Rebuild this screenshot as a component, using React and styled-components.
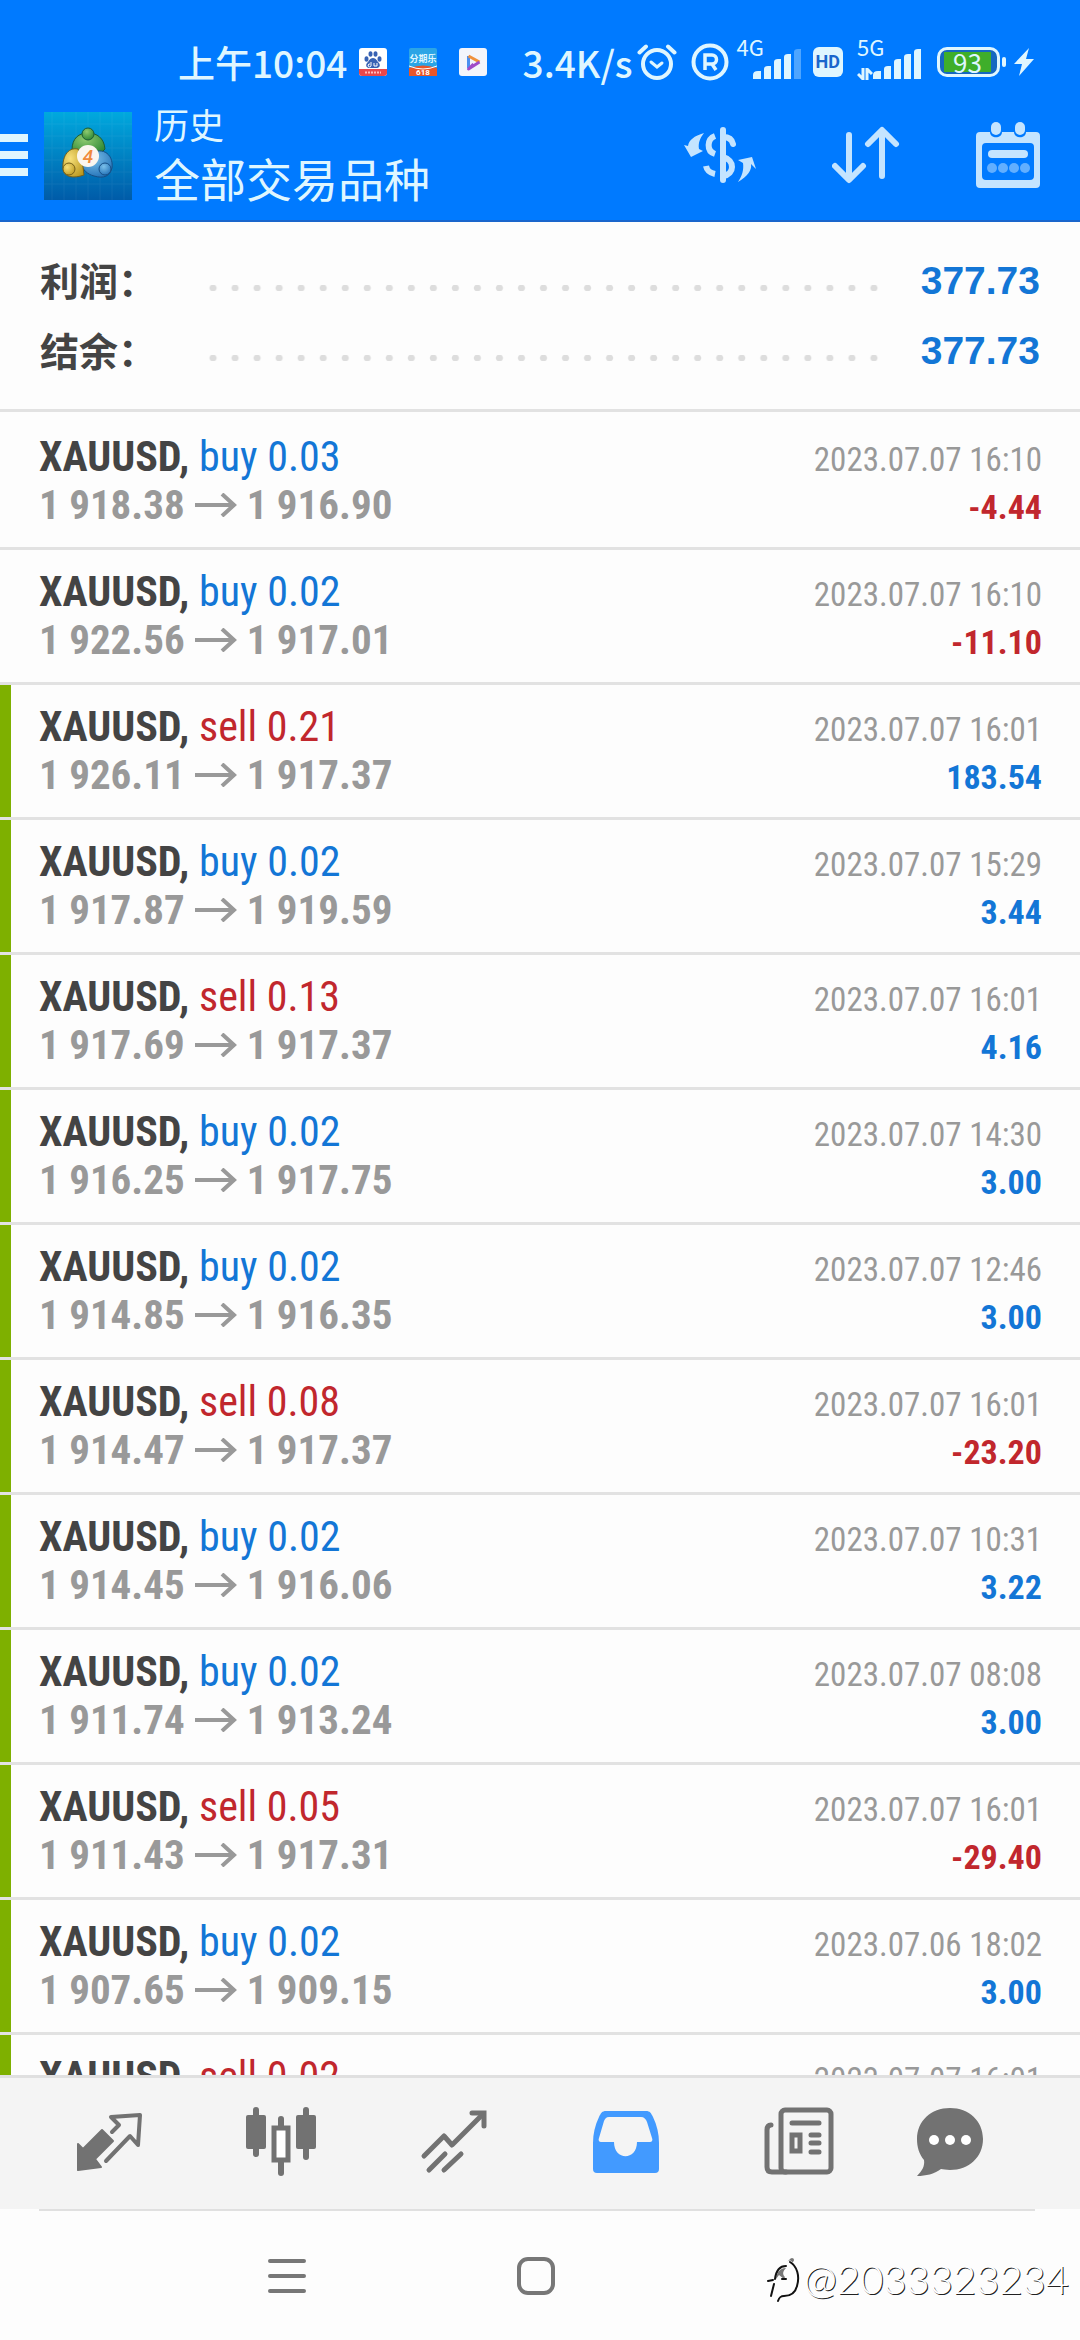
import React from "react";
import styled, { createGlobalStyle } from "styled-components";

const BLUE = "#1376d6";
const RED = "#c1272d";
const GREY = "#999";
const ICE = "#dff6ff";

const trades = [
  { type: "buy", lots: "0.03", open: "1 918.38", close: "1 916.90", time: "2023.07.07 16:10", profit: "-4.44", marked: false },
  { type: "buy", lots: "0.02", open: "1 922.56", close: "1 917.01", time: "2023.07.07 16:10", profit: "-11.10", marked: false },
  { type: "sell", lots: "0.21", open: "1 926.11", close: "1 917.37", time: "2023.07.07 16:01", profit: "183.54", marked: true },
  { type: "buy", lots: "0.02", open: "1 917.87", close: "1 919.59", time: "2023.07.07 15:29", profit: "3.44", marked: true },
  { type: "sell", lots: "0.13", open: "1 917.69", close: "1 917.37", time: "2023.07.07 16:01", profit: "4.16", marked: true },
  { type: "buy", lots: "0.02", open: "1 916.25", close: "1 917.75", time: "2023.07.07 14:30", profit: "3.00", marked: true },
  { type: "buy", lots: "0.02", open: "1 914.85", close: "1 916.35", time: "2023.07.07 12:46", profit: "3.00", marked: true },
  { type: "sell", lots: "0.08", open: "1 914.47", close: "1 917.37", time: "2023.07.07 16:01", profit: "-23.20", marked: true },
  { type: "buy", lots: "0.02", open: "1 914.45", close: "1 916.06", time: "2023.07.07 10:31", profit: "3.22", marked: true },
  { type: "buy", lots: "0.02", open: "1 911.74", close: "1 913.24", time: "2023.07.07 08:08", profit: "3.00", marked: true },
  { type: "sell", lots: "0.05", open: "1 911.43", close: "1 917.31", time: "2023.07.07 16:01", profit: "-29.40", marked: true },
  { type: "buy", lots: "0.02", open: "1 907.65", close: "1 909.15", time: "2023.07.06 18:02", profit: "3.00", marked: true },
  { type: "sell", lots: "0.02", open: "1 907.43", close: "1 917.31", time: "2023.07.07 16:01", profit: "-19.76", marked: true }
];

const AlarmIcon = () => (
  <svg width="40" height="38" viewBox="0 0 40 38" fill="none" stroke={ICE} strokeWidth="4" strokeLinecap="round">
    <circle cx="20" cy="21" r="14" />
    <path d="M2.500 9.500 9 3.500M37.500 9.500 31 3.500" />
    <path d="m14 19 6 5 5-4" strokeWidth="3" />
  </svg>
);

const RegisteredIcon = () => (
  <svg width="38" height="38" viewBox="0 0 38 38" fill="none" stroke={ICE}>
    <circle cx="19" cy="19" r="16.500" strokeWidth="4" />
    <path d="M14 27V12h7a4.500 4.500 0 0 1 0 9h-7m7 0 4 6" strokeWidth="3.500" />
  </svg>
);

const Bars = ({ full }) => (
  <svg width="50" height="32" viewBox="0 0 50 32" fill={ICE}>
    <path d="M0 31v-4q0-4 5-4h3v8zM11 31V21q0-3 4-3h3v13zM21 31V14q0-3 4-3h3v20zM31 31V9q0-3 4-3h3v25z" />
    <path d="M41 31V4q0-3 4-3h3v30z" opacity={full ? 1 : 0.35} />
  </svg>
);

const DataArrows = () => (
  <svg width="16" height="12" viewBox="0 0 16 12" fill="none" stroke={ICE} strokeWidth="3">
    <path d="M6 0v11L1 6M10 12V1l5 5" />
  </svg>
);

const BoltIcon = () => (
  <svg width="20" height="28" viewBox="0 0 20 28" fill={ICE}>
    <path d="M15 0 0 16h8L5 28 20 11h-8z" />
  </svg>
);

const PawIcon = () => (
  <svg width="28" height="28" viewBox="0 0 28 28">
    <rect width="28" height="28" rx="3" fill="#fff" />
    <g fill="#3862b4">
      <ellipse cx="7.500" cy="11" rx="2" ry="2.800" />
      <ellipse cx="11.500" cy="6" rx="2" ry="2.800" />
      <ellipse cx="16.500" cy="6" rx="2" ry="2.800" />
      <ellipse cx="20.500" cy="11" rx="2" ry="2.800" />
      <path d="M14 10c3 0 4 3 6 5 2 3 0 5-3 5h-6c-3 0-5-2-3-5 2-2 3-5 6-5z" />
    </g>
    <path d="M11 16a1.500 1.500 0 1 0 1 2v-4M15 15v3h3v-3" stroke="#fff" fill="none" />
    <path d="M0 21h28v4a3 3 0 0 1-3 3H3a3 3 0 0 1-3-3z" fill="#e8474c" />
    <path d="M6 24.500h16" stroke="#fbb" strokeWidth="2" strokeDasharray="2 1" />
  </svg>
);

const SaleIcon = () => (
  <svg width="28" height="28" viewBox="0 0 28 28">
    <rect width="28" height="28" rx="2" fill="#2ba5e6" />
    <path d="M0 20q14-5 28 0v8H0z" fill="#e8562a" />
    <path d="M0 18q14 6 28 0" fill="none" stroke="#fff" />
    <text x="14" y="14" fontSize="9" fontFamily="Noto Sans CJK SC, sans-serif" fontWeight="700" fill="#dff6ff" textAnchor="middle">分期乐</text>
    <text x="14" y="27" fontSize="8" fontFamily="Roboto, sans-serif" fontWeight="700" fill="#fff" textAnchor="middle">618</text>
  </svg>
);

const PlayIcon = () => (
  <svg width="28" height="28" viewBox="0 0 28 28" fill="none" strokeWidth="3" strokeLinejoin="round">
    <rect width="28" height="28" rx="3" fill="#f3f5fb" />
    <path d="M9.500 20V8" stroke="#4a8ff0" />
    <path d="m9.500 8 11 6" stroke="#f0913c" />
    <path d="m20.500 14-11 7 5-5" stroke="#a04bc8" />
  </svg>
);

const MetaLogo = () => (
  <svg width="88" height="88" viewBox="0 0 88 88">
    <defs>
      <linearGradient id="tile" x1="0" y1="0" x2="0" y2="1">
        <stop offset="0" stopColor="#00a9de" />
        <stop offset="1" stopColor="#005ba8" />
      </linearGradient>
      <radialGradient id="leaf" cx=".4" cy=".3" r=".8">
        <stop offset="0" stopColor="#8fca70" />
        <stop offset="1" stopColor="#23812f" />
      </radialGradient>
      <radialGradient id="gold" cx=".35" cy=".35" r=".8">
        <stop offset="0" stopColor="#f7e07a" />
        <stop offset="1" stopColor="#b8951c" />
      </radialGradient>
      <radialGradient id="sky" cx=".4" cy=".3" r=".8">
        <stop offset="0" stopColor="#7cc0ea" />
        <stop offset="1" stopColor="#1b6cb4" />
      </radialGradient>
    </defs>
    <rect width="88" height="88" fill="url(#tile)" />
    <path d="M8 0v88M20 0v88M32 0v88M44 0v88M56 0v88M68 0v88M80 0v88M0 12h88M0 24h88M0 36h88M0 48h88M0 60h88M0 72h88" stroke="#fff" opacity=".05" />
    <path d="M28 38c0-12 7-17 16-17s16 5 17 16l-6 6-22-1z" fill="url(#leaf)" stroke="#1e5b34" />
    <path d="M44 44c12-11 26-3 24 12-2 8-8 11-18 8-7-2-11-6-13-12z" fill="url(#sky)" stroke="#174f86" />
    <path d="M34 37c-11-2-16 9-15 20 1 8 10 10 21 6l-2-16z" fill="url(#gold)" stroke="#75601a" />
    <circle cx="44" cy="22" r="6" fill="url(#leaf)" stroke="#1e5b34" />
    <circle cx="61" cy="57" r="6" fill="url(#sky)" stroke="#174f86" />
    <circle cx="25" cy="57" r="6" fill="url(#gold)" stroke="#75601a" />
    <circle cx="44" cy="44" r="11" fill="#fbf6ef" />
    <text x="44" y="51" fontSize="19" fontStyle="italic" fontFamily="Roboto, sans-serif" fontWeight="500" fill="#f08a3c" textAnchor="middle">4</text>
  </svg>
);

const MenuIcon = () => (
  <svg width="28" height="42" viewBox="0 0 28 42" fill={ICE}>
    <path d="M0 0h28v8H0zM0 17h28v8H0zM0 34h28v8H0z" />
  </svg>
);

const CurrencyIcon = () => (
  <svg width="72" height="56" viewBox="0 0 72 56" fill="none" stroke="#c4e4ff" strokeWidth="6">
    <path d="M39 3v50" strokeLinecap="round" />
    <path d="M39 10c5 0 9 2 10 7" strokeLinecap="round" />
    <path d="M39 30c12 3 12 17 0 19" />
    <path d="M31 9c-8 3-9 15 0 18" />
    <path d="M22 39c1 5 4 7 9 8" strokeLinecap="butt" />
    <path d="M20 6C10 9 5 13 4 19l-4-1 7 12 12-6-4-2c-1-6 1-11 5-16zM54 55c10-6 14-12 13-18l5 5-4-12-14 3 5 3c1 7-1 13-5 19z" fill="#c4e4ff" stroke="none" />
  </svg>
);

const SortIcon = () => (
  <svg width="68" height="58" viewBox="0 0 68 58" fill="none" stroke="#c4e4ff" strokeWidth="6" strokeLinecap="round" strokeLinejoin="round">
    <path d="M17 9v44M3 40l14 14 14-14" />
    <path d="M50 50V5M36 18 50 4l14 14" />
  </svg>
);

const CalendarIcon = () => (
  <svg width="64" height="66" viewBox="0 0 64 66" fill="#c4e4ff">
    <path d="M4 10h10c0 7 12 7 12 0h12c0 7 12 7 12 0h10a4 4 0 0 1 4 4v48a4 4 0 0 1-4 4H4a4 4 0 0 1-4-4V14a4 4 0 0 1 4-4zm6 11a4 4 0 0 0-4 4v29a4 4 0 0 0 4 4h44a4 4 0 0 0 4-4V25a4 4 0 0 0-4-4z" fillRule="evenodd" />
    <rect x="15" y="0" width="10" height="13" rx="5" />
    <rect x="39" y="0" width="10" height="13" rx="5" />
    <rect x="12" y="28" width="40" height="8" rx="4" />
    <g opacity=".5">
      <circle cx="16" cy="46" r="5" />
      <circle cx="27" cy="46" r="5" />
      <circle cx="38" cy="46" r="5" />
      <circle cx="49" cy="46" r="5" />
    </g>
  </svg>
);

const ArrowIcon = () => (
  <svg width="42" height="24" viewBox="0 0 42 24" fill="none" stroke={GREY} strokeWidth="4">
    <path d="M0 12h38M27 1l12 11-12 11" />
  </svg>
);

const QuotesIcon = () => (
  <svg width="70" height="70" viewBox="0 0 70 70" fill="none" stroke="#727272" strokeWidth="4" strokeLinejoin="round" strokeLinecap="round">
    <path d="m39 26 7-7-8-8 29-2-2 30-8-9-24 25" />
    <path d="M29 24 40 35 22 53l6 8-23 3V38l5 5z" fill="#727272" strokeWidth="2" />
  </svg>
);

const CandlesIcon = () => (
  <svg width="70" height="70" viewBox="0 0 70 70" fill="#727272">
    <rect x="7" y="1" width="6" height="50" rx="3" />
    <rect x="0" y="9" width="20" height="34" rx="2" />
    <rect x="57" y="1" width="6" height="53" rx="3" />
    <rect x="50" y="9" width="20" height="34" rx="2" />
    <rect x="32" y="10" width="6" height="60" rx="3" />
    <rect x="28" y="22" width="14" height="32" fill="#fff" stroke="#727272" strokeWidth="5" />
  </svg>
);

const TrendIcon = () => (
  <svg width="70" height="70" viewBox="0 0 70 70" fill="none" stroke="#727272" strokeWidth="5" strokeLinecap="round">
    <path d="m5 50 20-20 8 9L64 8" strokeLinejoin="round" />
    <path d="M53 7h12v13" />
    <path d="M10 64 26 48M25 64l17-16" />
  </svg>
);

const InboxIcon = () => (
  <svg width="70" height="70" viewBox="0 0 70 70">
    <path d="M15 5h40c4 0 5 2 7 6 4 8 6 17 6 26v26a4 4 0 0 1-4 4H6a4 4 0 0 1-4-4V37c0-9 2-18 6-26 2-4 3-6 7-6zm3 6c-3 0-4 2-5 4L8 32c-1 2 0 4 2 4h13c0 19 23 19 23 0h13c2 0 3-2 2-4l-5-16c-1-3-3-5-6-5z" fill="#429aff" fillRule="evenodd" />
  </svg>
);

const NewsIcon = () => (
  <svg width="70" height="70" viewBox="0 0 70 70" fill="none" stroke="#727272" strokeWidth="5" strokeLinecap="round">
    <rect x="17" y="4" width="50" height="62" rx="4" />
    <path d="M7 19q-4 0-4 5v37q0 5 5 5h14" />
    <path d="M28 17h27M47 29h8M47 37h8M47 46h8" />
    <rect x="28" y="29" width="8" height="16" />
  </svg>
);

const ChatIcon = () => (
  <svg width="70" height="70" viewBox="0 0 70 70">
    <path d="M35 2c19 0 33 13 33 31S54 64 35 64c-4 0-7-1-9-1-7 5-15 7-24 7 5-5 8-10 7-16C4 48 2 41 2 33 2 15 16 2 35 2z" fill="#727272" />
    <g fill="#fff">
      <circle cx="19" cy="34" r="5" />
      <circle cx="35" cy="34" r="5" />
      <circle cx="51" cy="34" r="5" />
    </g>
  </svg>
);

const RecentsIcon = () => (
  <svg width="38" height="38" viewBox="0 0 38 38" stroke="#777" strokeWidth="4" strokeLinecap="round">
    <path d="M2 4h34M2 19h34M2 34h34" />
  </svg>
);

const HomeIcon = () => (
  <svg width="38" height="38" viewBox="0 0 38 38" fill="none" stroke="#777" strokeWidth="4">
    <rect x="2" y="2" width="34" height="34" rx="9" />
  </svg>
);

const BackIcon = () => (
  <svg width="38" height="38" viewBox="0 0 38 38" fill="none" stroke="#777" strokeWidth="4" strokeLinecap="round">
    <path d="M26 3 10 19" />
  </svg>
);

const FlowerIcon = () => (
  <svg width="36" height="50" viewBox="0 0 36 50" fill="none" strokeLinecap="round">
    <path d="M9 24c1-8 5-14 15-16 8 5 10 22 4 30-4 4-10 3-16 2z" fill="#fdfdfd" stroke="#fdfdfd" strokeWidth="3" />
    <path d="M10 25c1-7 4-11 10-11-3 3-4 6-1 9l-1 2-5-4z" fill="#777" />
    <path d="M20 12c-7 0-10 5-11 13M2 27l5-1M16 25h4M8 30 5 42" stroke="#111" strokeWidth="2" />
    <path d="M24 8c7 4 10 14 7 24-2 8-8 10-13 10-4 0-5 2-6 5" stroke="#111" strokeWidth="2" />
  </svg>
);

const SummaryRow = ({ label, value }) => (
  <SummaryLine>
    <dt>{label}</dt>
    <Dots />
    <dd>{value}</dd>
  </SummaryLine>
);

const TradeRow = ({ trade }) => (
  <Trade>
    <Marker $on={trade.marked} />
    <TradeBody>
      <Line>
        <Deal $sell={trade.type === "sell"}>
          <b>XAUUSD,</b> {trade.type} {trade.lots}
        </Deal>
        <Time>{trade.time}</Time>
      </Line>
      <Line>
        <Prices>
          {trade.open}
          <ArrowIcon />
          {trade.close}
        </Prices>
        <Profit $loss={trade.profit.startsWith("-")}>{trade.profit}</Profit>
      </Line>
    </TradeBody>
  </Trade>
);

const App = () => (
  <Screen>
    <GlobalStyle />
    <Header>
      <StatusBar>
        <Clock>上午10:04</Clock>
        <AppIcons>
          <PawIcon />
          <SaleIcon />
          <PlayIcon />
        </AppIcons>
        <Speed>3.4K/s</Speed>
        <AlarmIcon />
        <Registered>
          <RegisteredIcon />
        </Registered>
        <Signal>
          <span>4G</span>
          <Bars />
        </Signal>
        <Hd>HD</Hd>
        <Signal>
          <span>5G</span>
          <div>
            <DataArrows />
            <Bars full />
          </div>
        </Signal>
        <Battery>
          <span>93</span>
        </Battery>
        <BoltIcon />
      </StatusBar>
      <Toolbar>
        <IconButton aria-label="menu">
          <MenuIcon />
        </IconButton>
        <MetaLogo />
        <Titles>
          <small>历史</small>
          <h1>全部交易品种</h1>
        </Titles>
        <Actions>
          <IconButton aria-label="currency">
            <CurrencyIcon />
          </IconButton>
          <IconButton aria-label="sort">
            <SortIcon />
          </IconButton>
          <IconButton aria-label="calendar">
            <CalendarIcon />
          </IconButton>
        </Actions>
      </Toolbar>
    </Header>
    <Summary>
      <SummaryRow label="利润：" value="377.73" />
      <SummaryRow label="结余：" value="377.73" />
    </Summary>
    <TradeList>
      {trades.map((trade, i) => (
        <TradeRow key={i} trade={trade} />
      ))}
    </TradeList>
    <TabBar>
      <IconButton aria-label="quotes"><QuotesIcon /></IconButton>
      <IconButton aria-label="charts"><CandlesIcon /></IconButton>
      <IconButton aria-label="trade"><TrendIcon /></IconButton>
      <IconButton aria-label="history"><InboxIcon /></IconButton>
      <IconButton aria-label="news"><NewsIcon /></IconButton>
      <IconButton aria-label="messages"><ChatIcon /></IconButton>
    </TabBar>
    <SystemBar>
      <IconButton aria-label="recents"><RecentsIcon /></IconButton>
      <IconButton aria-label="home"><HomeIcon /></IconButton>
      <IconButton aria-label="back"><BackIcon /></IconButton>
      <Watermark>
        <FlowerIcon />
        <span>@2033323234</span>
      </Watermark>
    </SystemBar>
  </Screen>
);

const GlobalStyle = createGlobalStyle`
  * {
    box-sizing: border-box;
  }
  body {
    margin: 0;
    background: #fdfdfd;
    font-family: Roboto, "Noto Sans CJK SC", sans-serif;
  }
  svg {
    display: block;
    flex-shrink: 0;
  }
`;

const Screen = styled.div`
  display: flex;
  flex-direction: column;
  height: 100vh;
  overflow: hidden;
`;

const Header = styled.header`
  background: #007aff;
  border-bottom: 2px solid #1a66cc;
  color: ${ICE};
`;

const StatusBar = styled.div`
  display: flex;
  align-items: center;
  height: 90px;
  padding: 34px 46px 0 178px;
  font-family: "Noto Sans CJK SC", sans-serif;
  white-space: nowrap;
`;

const Clock = styled.span`
  font-size: 37px;
  font-weight: 500;
`;

const AppIcons = styled.div`
  display: flex;
  gap: 22px;
  margin: 0 auto 0 12px;
`;

const Speed = styled.span`
  margin-right: 4px;
  font-size: 37px;
  font-weight: 500;
`;

const Registered = styled.div`
  margin: 0 8px 0 14px;
`;

const Signal = styled.div`
  display: flex;
  flex-direction: column;
  align-items: flex-end;
  min-width: 66px;
  margin-top: -6px;
  span {
    align-self: flex-start;
    height: 10px;
    font-size: 22px;
    line-height: 16px;
  }
  div {
    display: flex;
    align-items: flex-end;
  }
`;

const Hd = styled.div`
  margin: 0 14px 0 10px;
  padding: 0 3px;
  border-radius: 6px;
  background: ${ICE};
  color: #1a66cc;
  font: 700 18px/30px Roboto, sans-serif;
`;

const Battery = styled.div`
  display: flex;
  position: relative;
  width: 63px;
  height: 30px;
  margin: 0 14px;
  padding: 2px 6px 2px 4px;
  border: 3px solid ${ICE};
  border-radius: 10px;
  background: #1668c0;
  span {
    flex: 1;
    background: #3fae2a;
    font-size: 26px;
    line-height: 20px;
    text-align: center;
  }
  &::after {
    content: "";
    position: absolute;
    right: -9px;
    top: 7px;
    width: 4px;
    height: 10px;
    border-radius: 2px;
    background: ${ICE};
  }
`;

const Toolbar = styled.div`
  display: flex;
  align-items: center;
  height: 130px;
  padding-right: 40px;
  > svg {
    margin: 2px 22px 0 16px;
  }
`;

const IconButton = styled.button`
  display: flex;
  align-items: center;
  justify-content: center;
  padding: 0;
  border: 0;
  background: none;
`;

const Titles = styled.div`
  display: flex;
  flex-direction: column;
  padding-bottom: 8px;
  font-family: "Noto Sans CJK SC", sans-serif;
  small {
    font-size: 35px;
    line-height: 52px;
  }
  h1 {
    margin: 0;
    font-size: 46px;
    font-weight: 400;
    line-height: 54px;
  }
`;

const Actions = styled.div`
  display: flex;
  gap: 76px;
  margin-left: auto;
`;

const Summary = styled.dl`
  margin: 0;
  padding: 22px 40px 25px;
  border-bottom: 3px solid #e2e2e2;
`;

const SummaryLine = styled.div`
  display: flex;
  align-items: center;
  height: 70px;
  dt {
    width: 162px;
    color: #444;
    font: 700 39px/70px "Noto Sans CJK SC", sans-serif;
  }
  dd {
    margin: 0;
    padding-top: 4px;
    color: ${BLUE};
    font: 700 39px/70px "Liberation Sans", Arial, sans-serif;
  }
`;

const Dots = styled.div`
  flex: 1;
  height: 6px;
  margin: 18px 36px 0 0;
  background: radial-gradient(circle, #ddd 3px, transparent 4px) 0 0 / 22px 6px round;
`;

const TradeList = styled.ul`
  flex: 1;
  min-height: 0;
  margin: 0;
  padding: 3px 0 0;
  overflow-y: auto;
  scrollbar-width: none;
  list-style: none;
  font-family: "Roboto Condensed", "Liberation Sans Narrow", Roboto, sans-serif;
`;

const Trade = styled.li`
  display: flex;
  border-bottom: 3px solid #e2e2e2;
`;

const Marker = styled.div`
  width: 11px;
  background: ${props => (props.$on ? "#7eb000" : "transparent")};
`;

const TradeBody = styled.div`
  flex: 1;
  padding: 18px 38px 18px 28px;
`;

const Line = styled.div`
  display: flex;
  align-items: baseline;
  justify-content: space-between;
  height: 48px;
  line-height: 48px;
  white-space: nowrap;
`;

const Deal = styled.span`
  color: ${props => (props.$sell ? RED : BLUE)};
  font-size: 42px;
  b {
    color: #444;
  }
`;

const Time = styled.time`
  color: ${GREY};
  font-size: 33px;
`;

const Prices = styled.span`
  display: flex;
  align-items: center;
  gap: 10px;
  color: ${GREY};
  font-size: 41px;
  font-weight: 700;
`;

const Profit = styled.span`
  color: ${props => (props.$loss ? RED : BLUE)};
  font-size: 34px;
  font-weight: 700;
`;

const TabBar = styled.nav`
  display: grid;
  grid-template-columns: repeat(5, 4fr) 3fr;
  align-items: center;
  height: 134px;
  padding: 0 6% 6px 2%;
  border-top: 3px solid #e0e0e0;
  background: #f4f4f4;
`;

const SystemBar = styled.div`
  display: grid;
  position: relative;
  grid-template-columns: repeat(3, 1fr);
  height: 131px;
  margin: 0 45px 0 39px;
  padding: 0 126px 0 124px;
  border-top: 2px solid #e0e0e0;
`;

const Watermark = styled.div`
  display: flex;
  position: absolute;
  right: -34px;
  bottom: 36px;
  gap: 2px;
  align-items: center;
  color: #fff;
  font: 300 40px/50px Lato, sans-serif;
  text-shadow: 1px 1px 0 #222;
`;

export default App;
